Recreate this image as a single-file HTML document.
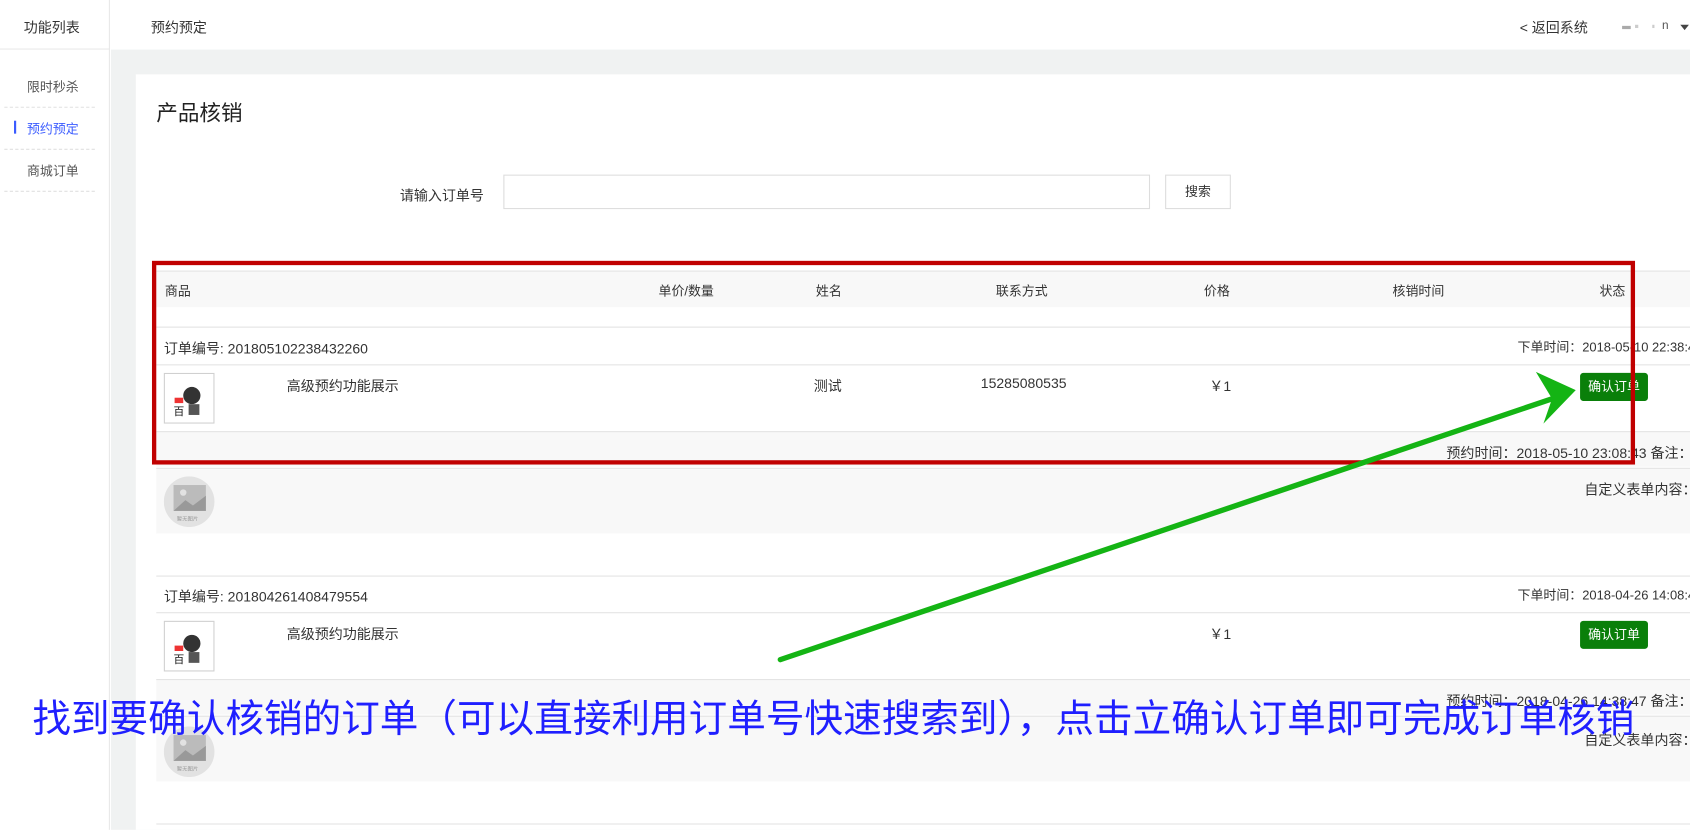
<!DOCTYPE html>
<html><head><meta charset="utf-8"><style>
*{margin:0;padding:0;box-sizing:border-box}
html,body{width:1690px;height:830px;overflow:hidden;background:#fff}
#w{position:absolute;left:0;top:0;width:1568px;height:770px;transform:scale(1.07781);transform-origin:0 0;overflow:hidden;font-family:"Liberation Sans","Noto Sans CJK SC",sans-serif;color:#333;font-size:12px}
.a{position:absolute;white-space:nowrap}
.hl{position:absolute;left:145px;right:0;height:1px;background:#e3e3e3}
.gray{position:absolute;left:145px;right:0;background:#f8f8f8}
.btn{position:absolute;background:#0a7f0a;color:#fff;border-radius:3px;width:63px;height:26px;line-height:26px;text-align:center;font-size:12px}
.thumb{position:absolute;width:47px;height:47px;border:1px solid #d0d0d0;background:#fff}
</style></head><body><div id="w">
<div class="a" style="left:0;top:0;width:102px;height:770px;border-right:1px solid #e8e8e8;background:#fff"></div>
<div class="a" style="left:0;top:45px;width:102px;height:1px;background:#e8e8e8"></div>
<div class="a" style="left:22px;top:15px;font-size:13px">功能列表</div>
<div class="a" style="left:25px;top:72px;color:#555">限时秒杀</div>
<div class="a" style="left:4px;top:99px;width:84px;border-top:1px dashed #e0e0e0"></div>
<div class="a" style="left:13px;top:112px;width:2px;height:12px;background:#3a5bff"></div>
<div class="a" style="left:25px;top:111px;color:#3a5bff">预约预定</div>
<div class="a" style="left:4px;top:138px;width:84px;border-top:1px dashed #e0e0e0"></div>
<div class="a" style="left:25px;top:150px;color:#555">商城订单</div>
<div class="a" style="left:4px;top:177px;width:84px;border-top:1px dashed #e0e0e0"></div>
<div class="a" style="left:140px;top:15px;font-size:13px">预约预定</div>
<div class="a" style="left:1410px;top:15px;font-size:13px">&lt; 返回系统</div>
<div class="a" style="left:1505px;top:24px;width:8px;height:3px;background:#aaa"></div>
<div class="a" style="left:1517px;top:23px;width:3px;height:3px;background:#ccc"></div>
<div class="a" style="left:1533px;top:23px;width:2px;height:3px;background:#ccc"></div>
<div class="a" style="left:1542px;top:18px;font-size:11px;color:#555">n</div>
<div class="a" style="left:1559px;top:23px;border-left:4px solid transparent;border-right:4px solid transparent;border-top:5px solid #444"></div>
<div class="a" style="left:103px;top:46px;width:1465px;height:724px;background:#f0f2f2"></div>
<div class="a" style="left:126px;top:69px;width:1442px;height:701px;background:#fff"></div>
<div class="a" style="left:145px;top:89px;font-size:20px;color:#222">产品核销</div>
<div class="a" style="left:371px;top:171px;font-size:13px">请输入订单号</div>
<div class="a" style="left:467px;top:162px;width:600px;height:32px;border:1px solid #ddd"></div>
<div class="a" style="left:1081px;top:162px;width:61px;height:32px;border:1px solid #ddd;text-align:center;line-height:30px">搜索</div>
<div class="gray" style="top:251px;height:34px;border-top:1px solid #e3e3e3"></div>
<div class="a" style="left:153px;top:261px">商品</div>
<div class="a" style="left:611px;top:261px">单价/数量</div>
<div class="a" style="left:757px;top:261px">姓名</div>
<div class="a" style="left:924px;top:261px">联系方式</div>
<div class="a" style="left:1117px;top:261px">价格</div>
<div class="a" style="left:1292px;top:261px">核销时间</div>
<div class="a" style="left:1484px;top:261px">状态</div>
<div class="hl" style="top:303px"></div>
<div class="a" style="left:152px;top:313px;font-size:13px">订单编号: 201805102238432260</div>
<div class="a" style="left:1408px;top:313px">下单时间：2018-05-10 22:38:43</div>
<div class="hl" style="top:338px"></div>
<div class="thumb" style="left:152px;top:346px"><svg width="45" height="45"><circle cx="25" cy="20" r="8" fill="#333"/><rect x="9" y="22" width="8" height="5" fill="#e33"/><text x="8" y="38" font-size="10" fill="#111" font-family="Noto Sans CJK SC">百</text><rect x="22" y="28" width="10" height="10" fill="#555"/></svg></div>
<div class="a" style="left:266px;top:348px;font-size:13px">高级预约功能展示</div>
<div class="a" style="left:755px;top:348px;font-size:13px">测试</div>
<div class="a" style="left:910px;top:348px;font-size:13px">15285080535</div>
<div class="a" style="left:1122px;top:348px;font-size:13px">￥1</div>
<div class="btn" style="left:1466px;top:346px">确认订单</div>
<div class="gray" style="top:400px;height:33px;border-top:1px solid #e3e3e3"></div>
<div class="a" style="left:1342px;top:410px;font-size:13px">预约时间：2018-05-10 23:08:43 备注：</div>
<div class="gray" style="top:434px;height:61px;border-top:1px solid #e3e3e3"></div>
<svg class="a" style="left:152px;top:442px" width="47" height="47"><circle cx="23.5" cy="23.5" r="23.5" fill="#e2e2e2"/><rect x="9" y="8" width="30" height="24" fill="#bbb"/><circle cx="18" cy="15" r="3" fill="#e2e2e2"/><path d="M9 32 L20 22 L27 27 L39 18 L39 32Z" fill="#999"/><text x="12" y="41" font-size="5" fill="#999" font-family="Noto Sans CJK SC">暂无图片</text></svg>
<div class="a" style="left:1470px;top:444px;font-size:13px">自定义表单内容：</div>
<div class="hl" style="top:534px"></div>
<div class="a" style="left:152px;top:543px;font-size:13px">订单编号: 201804261408479554</div>
<div class="a" style="left:1408px;top:543px">下单时间：2018-04-26 14:08:47</div>
<div class="hl" style="top:568px"></div>
<div class="thumb" style="left:152px;top:576px"><svg width="45" height="45"><circle cx="25" cy="20" r="8" fill="#333"/><rect x="9" y="22" width="8" height="5" fill="#e33"/><text x="8" y="38" font-size="10" fill="#111" font-family="Noto Sans CJK SC">百</text><rect x="22" y="28" width="10" height="10" fill="#555"/></svg></div>
<div class="a" style="left:266px;top:578px;font-size:13px">高级预约功能展示</div>
<div class="a" style="left:1122px;top:578px;font-size:13px">￥1</div>
<div class="btn" style="left:1466px;top:576px">确认订单</div>
<div class="gray" style="top:630px;height:33px;border-top:1px solid #e3e3e3"></div>
<div class="a" style="left:1342px;top:640px;font-size:13px">预约时间：2018-04-26 14:38:47 备注：</div>
<div class="gray" style="top:664px;height:61px;border-top:1px solid #e3e3e3"></div>
<svg class="a" style="left:152px;top:674px" width="47" height="47"><circle cx="23.5" cy="23.5" r="23.5" fill="#e2e2e2"/><rect x="9" y="8" width="30" height="24" fill="#bbb"/><circle cx="18" cy="15" r="3" fill="#e2e2e2"/><path d="M9 32 L20 22 L27 27 L39 18 L39 32Z" fill="#999"/><text x="12" y="41" font-size="5" fill="#999" font-family="Noto Sans CJK SC">暂无图片</text></svg>
<div class="a" style="left:1470px;top:676px;font-size:13px">自定义表单内容：</div>
<div class="hl" style="top:764px"></div>
<div class="a" style="left:141px;top:242px;width:1376px;height:189px;border:4px solid #c00000"></div>
<svg class="a" style="left:0;top:0" width="1568" height="770"><line x1="724" y1="612" x2="1440" y2="370" stroke="#14b414" stroke-width="5" stroke-linecap="round"/><path d="M1462 362 L1425 345 L1440 370 L1432 393Z" fill="#14b414"/></svg>
<div class="a" style="left:30px;top:638px;font-size:36px;line-height:52px;color:#1f1fff;font-family:'Noto Sans CJK SC',sans-serif;transform:scaleX(0.995);transform-origin:0 0">找到要确认核销的订单（可以直接利用订单号快速搜索到），点击立确认订单即可完成订单核销</div>
</div></body></html>
